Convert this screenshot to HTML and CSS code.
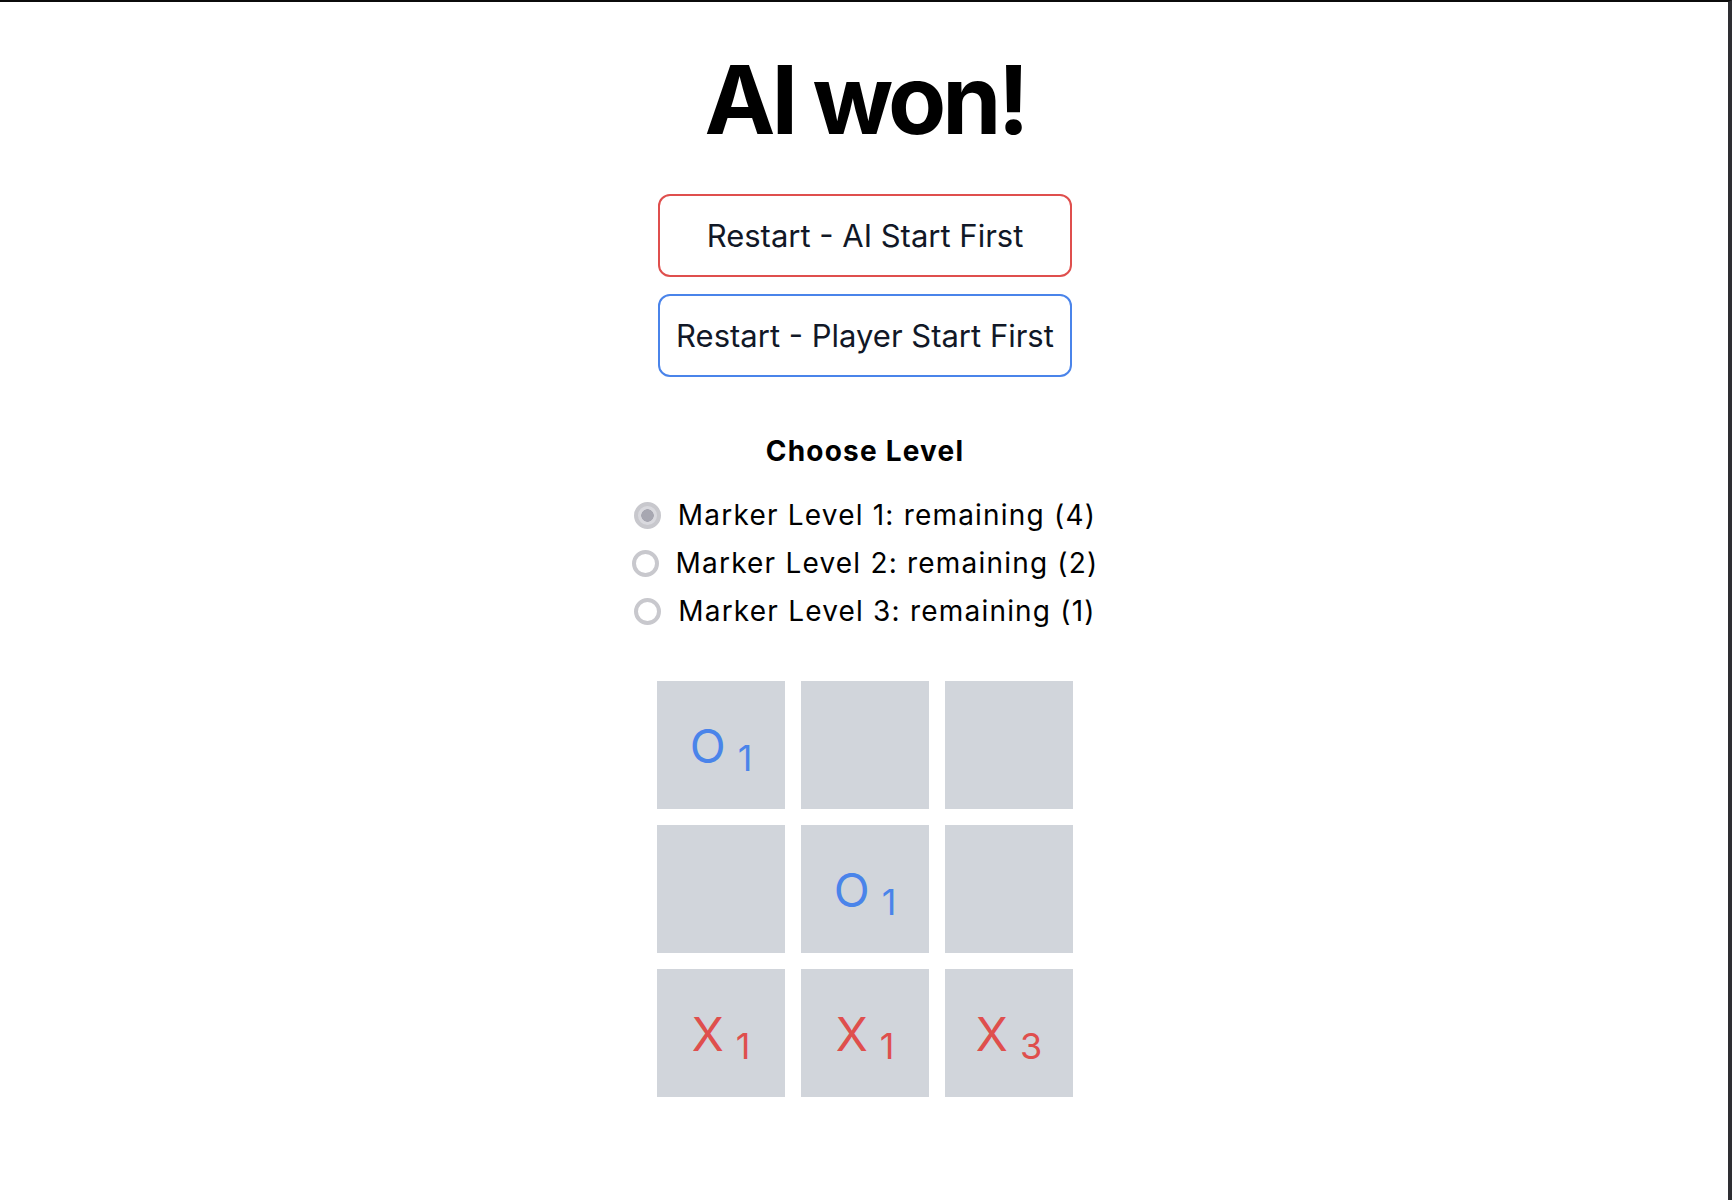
FILE: index.html
```html
<!DOCTYPE html>
<html lang="en">
<head>
<meta charset="utf-8">
<title>Tic Tac Toe</title>
<link rel="stylesheet" href="styles.css">
</head>
<body>
<main class="game">
  <h1 class="title">AI won!</h1>
  <div class="actions">
    <button class="btn btn-ai" type="button">Restart - AI Start First</button>
    <button class="btn btn-player" type="button">Restart - Player Start First</button>
  </div>
  <section class="levels">
    <h2 class="levels-title">Choose Level</h2>
    <label class="level"><input class="radio" type="radio" name="level" checked disabled><span>Marker Level 1: remaining (4)</span></label>
    <label class="level"><input class="radio" type="radio" name="level" disabled><span>Marker Level 2: remaining (2)</span></label>
    <label class="level"><input class="radio" type="radio" name="level" disabled><span>Marker Level 3: remaining (1)</span></label>
  </section>
  <div class="board">
    <div class="cell cell-o">O<sub class="lvl">1</sub></div>
    <div class="cell"></div>
    <div class="cell"></div>
    <div class="cell"></div>
    <div class="cell cell-o">O<sub class="lvl">1</sub></div>
    <div class="cell"></div>
    <div class="cell cell-x">X<sub class="lvl">1</sub></div>
    <div class="cell cell-x">X<sub class="lvl">1</sub></div>
    <div class="cell cell-x">X<sub class="lvl">3</sub></div>
  </div>
</main>
</body>
</html>
```

FILE: styles.css
```css
html {
  box-sizing: border-box;
  min-height: 100%;
  border-top: 2px solid #0b0b0b;
  border-right: 4px solid #2e2e32;
  background: #ffffff;
}

body {
  margin: 0;
  font-family: Inter, "Noto Sans", sans-serif;
  color: #000;
}

.game {
  display: flex;
  flex-direction: column;
  align-items: center;
  padding-top: 50px;
  padding-left: 2px;
}

.title {
  margin: 0;
  font-size: 95px;
  line-height: 96px;
  font-weight: 700;
  letter-spacing: -4px;
}

.actions {
  display: flex;
  flex-direction: column;
  gap: 17px;
  margin-top: 46px;
  width: 414px;
}

.btn {
  height: 83px;
  background: #fff;
  border-radius: 12px;
  font-family: Inter, "Noto Sans", sans-serif;
  font-size: 31px;
  color: #111827;
  padding: 0;
  white-space: nowrap;
  cursor: pointer;
}

.btn-ai {
  border: 2px solid #df4f4d;
}

.btn-player {
  border: 2px solid #4a84ea;
}

.levels {
  display: flex;
  flex-direction: column;
  align-items: center;
  margin-top: 56px;
}

.levels-title {
  margin: 0 0 22px;
  font-size: 28px;
  line-height: 36px;
  font-weight: 700;
  letter-spacing: 1.2px;
}

.level {
  display: flex;
  align-items: center;
  height: 48px;
  font-size: 28px;
  letter-spacing: 1.2px;
}

.radio {
  appearance: none;
  -webkit-appearance: none;
  box-sizing: border-box;
  width: 27px;
  height: 27px;
  margin: 0 17px 0 0;
  border: 4px solid #c8c8cd;
  border-radius: 50%;
  background: #fff;
}

.radio:checked {
  background: radial-gradient(circle, #a7a7b1 0 6px, #d9d9de 6.5px);
}

.board {
  display: grid;
  grid-template-columns: repeat(3, 128px);
  grid-auto-rows: 128px;
  gap: 16px;
  margin-top: 46px;
}

.cell {
  display: flex;
  align-items: center;
  justify-content: center;
  background: #d1d5db;
  font-size: 47px;
  line-height: 1;
}

.cell-o {
  color: #4a84ea;
}

.cell-x {
  color: #df4f4d;
}

.lvl {
  font-size: 36px;
  margin-left: 12px;
  vertical-align: baseline;
  position: relative;
  top: 13px;
}
```
